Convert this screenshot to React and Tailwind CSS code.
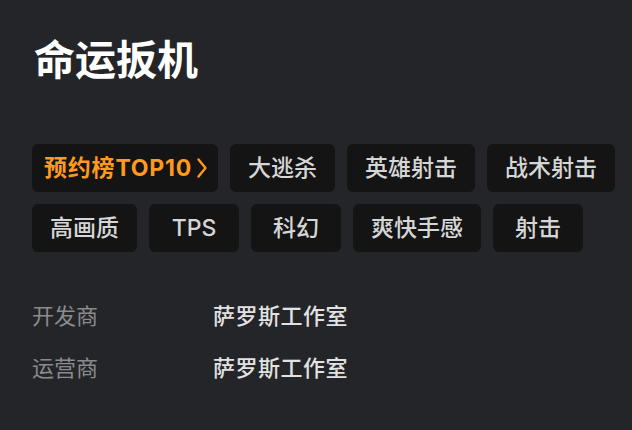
import React from "react";

const tags = ["大逃杀", "英雄射击", "战术射击", "高画质", "TPS", "科幻", "爽快手感", "射击"];

const info = [
  { label: "开发商", value: "萨罗斯工作室" },
  { label: "运营商", value: "萨罗斯工作室" },
];

function Chevron() {
  return (
    <svg width="12" height="22" viewBox="0 0 12 22" fill="none" className="ml-[4px]">
      <path d="M2.5 2.5l7 8.5-7 8.5" stroke="#ff9a1f" strokeWidth="2.4" strokeLinecap="round" strokeLinejoin="round" />
    </svg>
  );
}

export default function App() {
  return (
    <div
      className="w-[632px] h-[430px] bg-[#242528] px-8 pt-[36px] overflow-hidden"
      style={{ fontFamily: 'Inter, "Noto Sans CJK SC", "Noto Sans", sans-serif' }}
    >
      <h1 className="text-[41px] leading-[48px] font-bold text-white pl-[2px]">命运扳机</h1>

      {/* game tags */}
      <div className="flex flex-wrap gap-3 mt-[60px] w-[590px]">
        <div className="h-12 flex items-center pl-3 pr-[10px] rounded-md bg-[#141414] text-[23px] font-bold text-[#ff9a1f] tracking-[0.8px]">
          预约榜TOP10
          <Chevron />
        </div>
        {tags.map((tag) => (
          <div
            key={tag}
            className="h-12 min-w-[90px] flex items-center justify-center px-[18px] rounded-md bg-[#141414] text-[23px] font-medium text-[#d6d6d6]"
          >
            {tag}
          </div>
        ))}
      </div>

      {/* publisher info */}
      <div className="mt-[48px] flex flex-col gap-[20px]">
        {info.map((row) => (
          <div key={row.label} className="flex items-center h-8 text-[22px]">
            <span className="w-[181px] text-[#8b8b8e]">{row.label}</span>
            <span className="font-medium text-[#e2e2e2] tracking-[0.5px]">{row.value}</span>
          </div>
        ))}
      </div>
    </div>
  );
}
